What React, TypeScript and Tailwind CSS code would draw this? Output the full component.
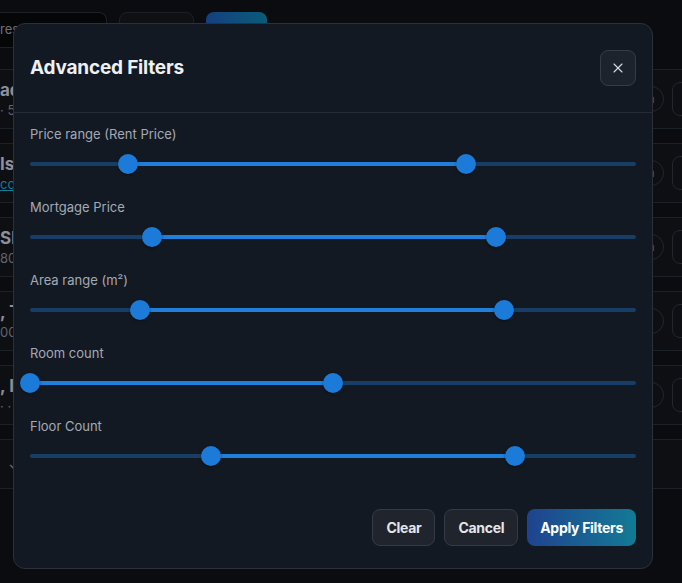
import React from 'react';
import { X } from 'lucide-react';

const filters = [
  { label: 'Price range (Rent Price)', min: 16.2, max: 71.9 },
  { label: 'Mortgage Price', min: 20.1, max: 76.9 },
  { label: 'Area range (m²)', min: 18.2, max: 78.2 },
  { label: 'Room count', min: 0, max: 50 },
  { label: 'Floor Count', min: 29.9, max: 80 },
];

const rows = [
  { title: 'ad', sub: '· 5', link: false },
  { title: 'Is', sub: 'co', link: true },
  { title: 'Sl', sub: '80', link: false },
  { title: ', T', sub: '00', link: false },
  { title: ', I', sub: '· ·', link: false },
];

const RangeSlider = ({ label, min, max }: { label: string; min: number; max: number }) => (
  <div className="flex flex-col gap-[10px]">
    <div className="text-[13px] leading-5 text-[#a4aab5]">{label}</div>
    <div className="relative h-5">
      <div className="absolute inset-x-0 top-1/2 h-[4px] -translate-y-1/2 rounded-full bg-[#183e68]" />
      <div
        className="absolute top-1/2 h-[4px] -translate-y-1/2 bg-[#1f7fdb]"
        style={{ left: `${min}%`, width: `${max - min}%` }}
      />
      {[min, max].map((v, i) => (
        <div
          key={i}
          className="absolute top-0 h-5 w-5 -translate-x-1/2 rounded-full bg-[#1c7ad8] shadow-[0_1px_3px_rgba(0,0,0,0.4)]"
          style={{ left: `${v}%` }}
        />
      ))}
    </div>
  </div>
);

export default function App() {
  return (
    <div className="relative h-[583px] w-[682px] overflow-hidden bg-[#0a0c10] font-['Inter','Noto_Sans',sans-serif]">
      {/* page behind the dialog */}
      <div className="flex h-full flex-col">
        <div className="flex items-center gap-3 pt-[12px]">
          <div className="flex h-[36px] w-[107px] items-center rounded-r-lg border-y border-r border-[#1c2027] bg-[#050608] text-[13px] text-[#6b7078]">
            res
          </div>
          <div className="h-[36px] w-[75px] rounded-lg border border-[#1c2027] bg-[#0e1014]" />
          <div className="h-[36px] w-[61px] rounded-lg bg-gradient-to-r from-[#153f80] to-[#0b5b78]" />
        </div>
        <div className="mt-[21px] flex flex-col gap-[14px]">
          {rows.map((r, i) => (
            <div
              key={i}
              className="flex h-[60px] items-center justify-between border-y border-[#1c2027] bg-[#0d0f13]"
            >
              <div className="flex flex-col items-start whitespace-nowrap leading-tight">
                <span className="text-[17px] font-bold text-[#8d9098]">{r.title}</span>
                <span className={r.link ? 'text-[13px] text-[#0f7f9a] underline' : 'text-[13px] text-[#61656d]'}>
                  {r.sub}
                </span>
              </div>
              <div className="flex items-center gap-[8px]">
                <div className="flex h-[26px] w-[26px] items-center justify-center rounded-full border border-[#22262d] text-[12px] text-[#7d4a3e]">
                  {i < 3 ? 'n' : 'f'}
                </div>
                <div className="mr-[-20px] h-[34px] w-[30px] rounded-lg border border-[#22262d]" />
              </div>
            </div>
          ))}
          <div className="flex h-[50px] items-center border-y border-[#1c2027] bg-[#0d0f13] pl-[8px] text-[#6b7078]">
            ⌄
          </div>
        </div>
      </div>

      {/* dialog */}
      <div className="absolute left-[13px] top-[23px] flex h-[546px] w-[640px] flex-col rounded-xl border border-[#2b3039] bg-[#131922]">
        <div className="flex items-center justify-between border-b border-[#262b34] py-[26px] pl-[16px] pr-[16px]">
          <h2 className="text-[19px] font-bold tracking-[-0.2px] text-[#eef0f3]">Advanced Filters</h2>
          <button className="flex h-[36px] w-[36px] items-center justify-center rounded-lg border border-[#363b45] bg-[#1d232c] text-[#d9dce1]">
            <X size={16} strokeWidth={1.6} />
          </button>
        </div>
        <div className="flex flex-col gap-[23px] px-[16px] pt-[11px]">
          {filters.map((f) => (
            <RangeSlider key={f.label} {...f} />
          ))}
        </div>
        <div className="mt-auto flex justify-end gap-[9px] pb-[22px] pr-[16px]">
          <button className="h-[37px] rounded-lg border border-[#353a44] bg-[#1f242d] px-[13px] text-[14px] font-bold tracking-[-0.3px] text-[#e4e6ea]">
            Clear
          </button>
          <button className="h-[37px] rounded-lg border border-[#353a44] bg-[#1f242d] px-[13px] text-[14px] font-bold tracking-[-0.3px] text-[#e4e6ea]">
            Cancel
          </button>
          <button className="h-[37px] rounded-lg bg-gradient-to-r from-[#1f428f] to-[#127a95] px-[13px] text-[14px] font-bold tracking-[-0.3px] text-white">
            Apply Filters
          </button>
        </div>
      </div>
    </div>
  );
}
